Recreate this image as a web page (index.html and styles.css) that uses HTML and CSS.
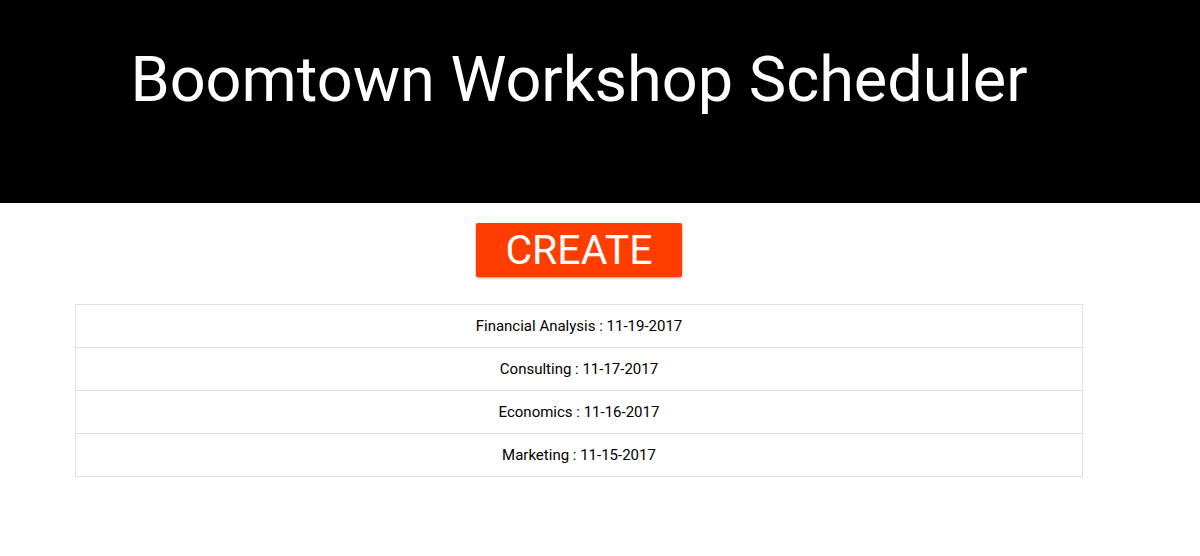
FILE: index.html
```html
<!DOCTYPE html>
<html>
<head>
<meta charset="utf-8">
<link rel="stylesheet" href="styles.css">
</head>
<body>
<header class="header">
  <div class="inner">
    <h1 class="title">Boomtown Workshop Scheduler</h1>
  </div>
</header>
<main class="main">
  <button class="create">CREATE</button>
  <ul class="list">
    <li class="item">Financial Analysis : 11-19-2017</li>
    <li class="item">Consulting : 11-17-2017</li>
    <li class="item">Economics : 11-16-2017</li>
    <li class="item">Marketing : 11-15-2017</li>
  </ul>
</main>
</body>
</html>
```
FILE: styles.css
```css
html, body {
  margin: 0;
  padding: 0;
  background: #fff;
  font-family: Roboto, "Liberation Sans", sans-serif;
}
.header {
  background: #000;
  height: 203px;
  box-sizing: border-box;
  padding-top: 38px;
}
.inner {
  width: 1158px;
  display: flex;
  justify-content: center;
}
.title {
  margin: 0;
  color: #fff;
  font-weight: 400;
  font-size: 63px;
  line-height: 84px;
}
.main {
  width: 1158px;
  display: flex;
  flex-direction: column;
  align-items: center;
  padding-top: 20px;
}
.create {
  width: 206px;
  height: 54px;
  margin: 0;
  background: #ff3d00;
  color: #fff;
  border: none;
  border-radius: 2px;
  font-family: Roboto, "Liberation Sans", sans-serif;
  font-size: 41px;
  font-weight: 400;
  line-height: 54px;
  padding: 0;
  box-shadow: 0 1px 3px rgba(0,0,0,0.25), 0 1px 2px rgba(0,0,0,0.2);
}
.list {
  list-style: none;
  margin: 27px 0 0;
  padding: 0;
  width: 1008px;
  border: 1px solid #e0e0e0;
  box-sizing: border-box;
}
.item {
  height: 42px;
  line-height: 42px;
  text-align: center;
  font-size: 15px;
  color: #000;
  border-top: 1px solid #e0e0e0;
}
.item:first-child {
  border-top: none;
}
```
